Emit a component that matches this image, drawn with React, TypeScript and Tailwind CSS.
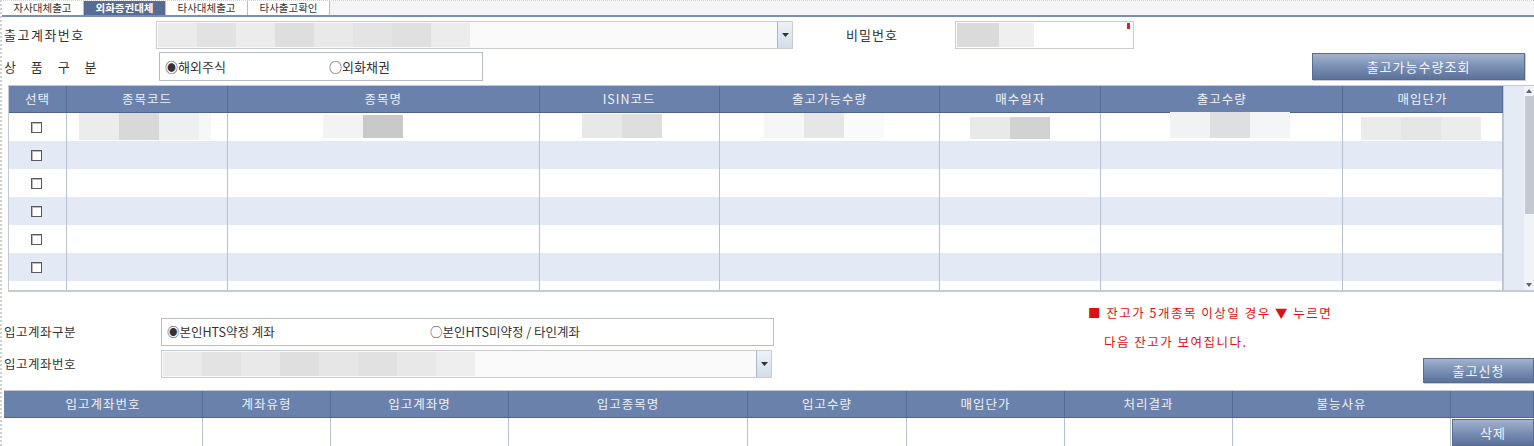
import React from "react";

const FONT = { fontFamily: '"Noto Sans CJK KR", "Noto Sans", sans-serif' };

const tabs = ["자사대체출고", "외화증권대체", "타사대체출고", "타사출고확인"];

const topCols = [
  { label: "선택", w: 58 },
  { label: "종목코드", w: 161 },
  { label: "종목명", w: 312 },
  { label: "ISIN코드", w: 180 },
  { label: "출고가능수량", w: 221 },
  { label: "매수일자", w: 161 },
  { label: "출고수량", w: 242 },
  { label: "매입단가", w: 160 },
];

const bottomCols = [
  { label: "입고계좌번호", w: 199 },
  { label: "계좌유형", w: 128 },
  { label: "입고계좌명", w: 178 },
  { label: "입고종목명", w: 239 },
  { label: "입고수량", w: 159 },
  { label: "매입단가", w: 158 },
  { label: "처리결과", w: 168 },
  { label: "불능사유", w: 218 },
  { label: "", w: 83 },
];

// masked values in the first row: [offset from cell left, top, height, shades]
const maskRow: [number, number, number, string[]][] = [
  [0, 0, 0, []],
  [12, 0, 27, ["#ececec", "#d8d8d8", "#eeeff1", "#f6f7f8"]],
  [95, 2, 23, ["#f3f3f3", "#c9c9c9"]],
  [42, 1, 24, ["#e8e8e8", "#dedede"]],
  [44, 0, 25, ["#f6f6f6", "#e6e6e6", "#fafafa"]],
  [30, 4, 22, ["#e9e9e9", "#d2d2d2"]],
  [69, -1, 26, ["#f1f2f3", "#dedfe0", "#f4f5f7"]],
  [18, 4, 23, ["#ebebeb", "#e6e6e6", "#ececec"]],
];

function Mask({ shades, h, w = 40 }: { shades: string[]; h: number; w?: number }) {
  return (
    <div className="flex">
      {shades.map((c, i) => (
        <div key={i} style={{ background: c, height: h, width: i === 3 ? 12 : w }} />
      ))}
    </div>
  );
}

function Combo({ width, shades }: { width: number; shades: string[] }) {
  return (
    <div
      className="flex h-[28px] border border-[#c9ccd1] bg-[#fafafa]"
      style={{ width }}
    >
      <div className="flex flex-1 items-center pl-[1px]">
        <div className="flex">
          {shades.map((c, i) => (
            <div key={i} className="h-[24px] w-[39px]" style={{ background: c }} />
          ))}
        </div>
      </div>
      <div className="flex w-[15px] items-center justify-center border-l border-[#aeb6c2] bg-gradient-to-b from-[#eef2f7] to-[#d3dce8]">
        <svg width="7" height="4" viewBox="0 0 7 4">
          <path d="M0 0h7L3.5 4z" fill="#333" />
        </svg>
      </div>
    </div>
  );
}

function Btn({ children, className }: { children: React.ReactNode; className: string }) {
  return (
    <button
      className={`flex items-center justify-center border border-[#5a6c8e] bg-gradient-to-b from-[#a3b3cf] via-[#7a8fb4] to-[#5d7299] text-[13px] tracking-[1px] text-[#f2f4f8] shadow-[1px_1px_0_#c7ccd6] ${className}`}
    >
      {children}
    </button>
  );
}

function Checkbox() {
  return <div className="h-[11px] w-[11px] border border-[#5a5a5a] bg-white shadow-[inset_1px_1px_0_#bbb]" />;
}

export default function App() {
  return (
    <div
      className="h-[446px] w-[1534px] overflow-hidden border-l-2 border-t border-dotted border-[#d0d0d0] bg-white text-[13px] text-[#333]"
      style={FONT}
    >
      {/* tab strip */}
      <div className="flex h-[16px] border-b-2 border-[#7b8db0] bg-[#f4f4f6]">
        {tabs.map((t, i) => (
          <div
            key={t}
            className={`flex h-[14px] w-[82px] items-center justify-center border-r border-[#b9bfca] text-[10.5px] leading-none ${
              i === 1 ? "bg-[#566c96] font-bold text-white" : "bg-white text-[#333]"
            }`}
          >
            {t}
          </div>
        ))}
      </div>

      {/* 출고계좌번호 / 비밀번호 */}
      <div className="mt-[4px] flex h-[28px] items-center">
        <div className="w-[154px] pl-[2px] tracking-[1.5px]">출고계좌번호</div>
        <Combo
          width={637}
          shades={["#ebebeb", "#e2e2e2", "#ececec", "#dedede", "#e9e9e9", "#e4e4e4", "#e0e0e0", "#ececec"]}
        />
        <div className="ml-[53px] w-[109px] tracking-[1px]">비밀번호</div>
        <div className="relative flex h-[28px] w-[179px] items-center border border-[#c9ccd1] bg-white pl-[1px]">
          <div className="h-[24px] w-[42px] bg-[#dadada]" />
          <div className="h-[24px] w-[35px] bg-[#efefef]" />
          <div className="absolute right-[3px] top-[1px] h-[6px] w-[3px] bg-[#e02020]" />
        </div>
      </div>

      {/* 상품구분 */}
      <div className="mt-[3px] flex h-[29px] items-center">
        <div className="w-[157px] pl-[2px] tracking-[6px]">상 품 구 분</div>
        <div className="flex h-[29px] w-[324px] items-center border border-[#b7bcc5] bg-white pl-[5px]">
          <span className="w-[164px]">◉해외주식</span>
          <span>○외화채권</span>
        </div>
        <div className="flex-1" />
        <Btn className="mr-[9px] h-[27px] w-[213px]">출고가능수량조회</Btn>
      </div>

      {/* holdings grid */}
      <div className="ml-[6px] mt-[4px] flex h-[207px] border-b-2 border-[#c5cbd3]">
        <div className="w-[1495px] overflow-hidden border-l border-[#c3cad6]">
          <div className="flex h-[28px] border-b border-t border-[#4f6489] border-t-[#c3cad6] bg-[#6a82ab]">
            {topCols.map((c) => (
              <div
                key={c.label}
                className="flex items-center justify-center border-r border-[#566d96] text-[12.5px] tracking-[1px] text-[#eef1f7]"
                style={{ width: c.w }}
              >
                {c.label}
              </div>
            ))}
          </div>
          {Array.from({ length: 7 }).map((_, r) => (
            <div key={r} className={`flex h-[28px] ${r % 2 ? "bg-[#e3eaf5]" : "bg-white"}`}>
              {topCols.map((c, ci) => (
                <div
                  key={c.label}
                  className="relative border-r border-[#b8c1ce]"
                  style={{ width: c.w }}
                >
                  {ci === 0 && (
                    <div className="flex h-full items-center justify-center pr-[1px]">
                      <Checkbox />
                    </div>
                  )}
                  {ci > 0 && r === 0 && (
                    <div
                      className="absolute"
                      style={{ left: maskRow[ci][0], top: maskRow[ci][1] }}
                    >
                      <Mask shades={maskRow[ci][3]} h={maskRow[ci][2]} />
                    </div>
                  )}
                </div>
              ))}
            </div>
          ))}
        </div>
        <div className="flex w-[31px] justify-end border-l border-t border-[#c3cad6] bg-[#e5ebf5]">
          <div className="flex w-[10px] flex-col items-center bg-[#f0f3f8] py-[3px]">
            <svg width="6" height="4" viewBox="0 0 6 4">
              <path d="M3 0l3 4H0z" fill="#56657e" />
            </svg>
            <div className="mt-[3px] h-[118px] w-[9px] bg-[#c3c8d3]" />
            <div className="flex-1" />
            <svg width="6" height="4" viewBox="0 0 6 4">
              <path d="M0 0h6L3 4z" fill="#56657e" />
            </svg>
          </div>
        </div>
      </div>

      {/* destination section */}
      <div className="flex h-[98px]">
        <div className="w-[772px] pt-[26px]">
          <div className="flex h-[28px] items-center">
            <div className="w-[159px] pl-[2px] text-[12.5px] tracking-[0.5px]">입고계좌구분</div>
            <div className="flex h-[28px] flex-1 items-center border border-[#b7bcc5] bg-white pl-[5px] text-[12.5px]">
              <span className="w-[263px]">◉본인HTS약정 계좌</span>
              <span>○본인HTS미약정 / 타인계좌</span>
            </div>
          </div>
          <div className="mt-[4px] flex h-[28px] items-center">
            <div className="w-[159px] pl-[2px] text-[12.5px] tracking-[0.5px]">입고계좌번호</div>
            <Combo
              width={611}
              shades={["#ebebeb", "#e3e3e3", "#e9e9e9", "#dfdfdf", "#e6e6e6", "#e1e1e1", "#e8e8e8", "#eeeeee"]}
            />
          </div>
        </div>
        <div className="ml-[314px] flex flex-col pt-[12px] text-[12.5px] text-[#e01010]">
          <div className="tracking-[1.5px]">■ 잔고가 5개종목 이상일 경우 ▼ 누르면</div>
          <div className="ml-[16px] mt-[10px] tracking-[1.5px]">다음 잔고가 보여집니다.</div>
        </div>
        <div className="flex flex-1 items-end justify-end pb-[7px]">
          <Btn className="h-[25px] w-[111px]">출고신청</Btn>
        </div>
      </div>

      {/* request grid */}
      <div className="ml-[2px]">
        <div className="flex h-[28px] border-b border-t border-[#4f6489] border-t-[#c3cad6] bg-[#6a82ab]">
          {bottomCols.map((c, i) => (
            <div
              key={i}
              className="flex items-center justify-center border-r border-[#566d96] text-[12.5px] tracking-[1px] text-[#eef1f7]"
              style={{ width: c.w }}
            >
              {c.label}
            </div>
          ))}
        </div>
        <div className="flex h-[28px] bg-white">
          {bottomCols.map((c, i) => (
            <div key={i} className="border-r border-[#b8c1ce]" style={{ width: c.w }}>
              {i === bottomCols.length - 1 && (
                <Btn className="ml-[1px] mt-[1px] h-[27px] w-[82px]">삭제</Btn>
              )}
            </div>
          ))}
        </div>
      </div>
    </div>
  );
}
